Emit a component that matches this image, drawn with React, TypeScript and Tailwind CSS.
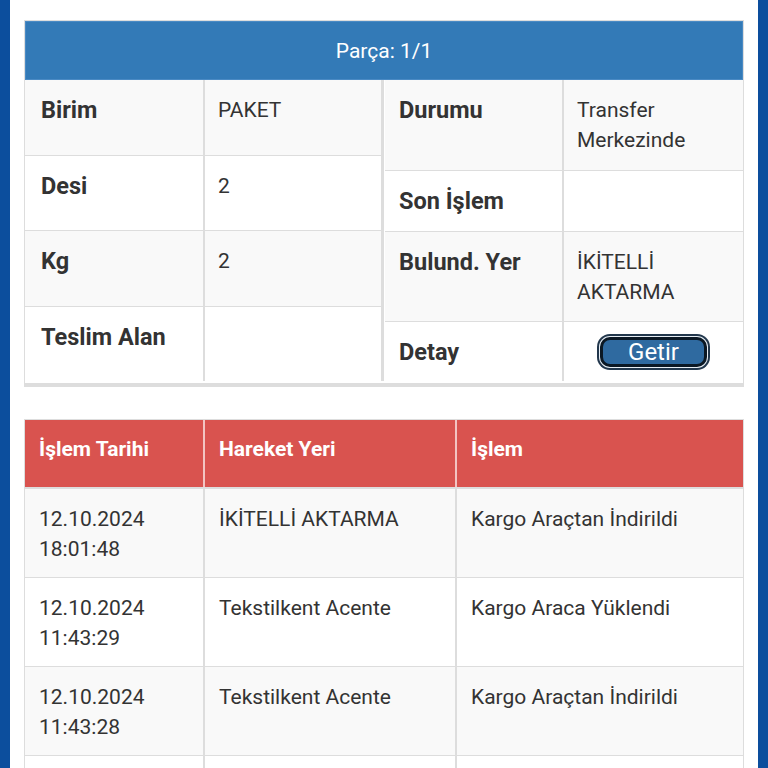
import React from 'react'

const parcaLeft = [
  { label: 'Birim', value: 'PAKET' },
  { label: 'Desi', value: '2' },
  { label: 'Kg', value: '2' },
  { label: 'Teslim Alan', value: '' },
]

const hareketler = [
  { tarih: '12.10.2024', saat: '18:01:48', yer: 'İKİTELLİ AKTARMA', islem: 'Kargo Araçtan İndirildi' },
  { tarih: '12.10.2024', saat: '11:43:29', yer: 'Tekstilkent Acente', islem: 'Kargo Araca Yüklendi' },
  { tarih: '12.10.2024', saat: '11:43:28', yer: 'Tekstilkent Acente', islem: 'Kargo Araçtan İndirildi' },
  { tarih: '12.10.2024', saat: '11:20:15', yer: 'Tekstilkent Acente', islem: 'Kargo Kabul Edildi' },
]

export default function App() {
  return (
    <div className="min-h-screen bg-[#0c4e9d] px-[10px] font-['Roboto','Liberation_Sans',sans-serif] text-[21px] leading-[30px] text-[#333]">
      <div className="min-h-screen bg-white px-[14px] pt-5 pb-10">
        {/* parça paneli */}
        <div className="border border-[#ddd]">
          <div className="flex h-[59px] items-center justify-center border border-[#4a8ac4] bg-[#337ab7] text-[21px] text-white">
            Parça: 1/1
          </div>

          <div className="flex items-stretch border-b-[3px] border-[#ddd] pb-[2px]">
            <div className="flex w-1/2 flex-col border-r-[3px] border-[#ddd]">
              {parcaLeft.map((r, i) => (
                <div
                  key={r.label}
                  className={`grid flex-1 grid-cols-[180px_1fr] border-b border-[#ddd] last:border-b-0 ${i % 2 === 0 ? 'bg-[#f9f9f9]' : 'bg-white'}`}
                >
                  <div className="border-r-2 border-[#ddd] px-4 py-[15px] text-[23.5px] font-bold">{r.label}</div>
                  <div className="px-[13px] py-[15px]">{r.value}</div>
                </div>
              ))}
            </div>

            <div className="flex w-1/2 flex-col pl-[1px]">
              <div className="grid grid-cols-[179px_1fr] border-b border-[#ddd] bg-[#f9f9f9]">
                <div className="border-r-2 border-[#ddd] px-[14px] pt-[15px] pb-[15px] text-[23.5px] font-bold">Durumu</div>
                <div className="px-[13px] pt-[15px] pb-[15px]">
                  Transfer
                  <br />
                  Merkezinde
                </div>
              </div>
              <div className="grid grid-cols-[179px_1fr] border-b border-[#ddd] bg-white">
                <div className="border-r-2 border-[#ddd] px-[14px] pt-[15px] pb-[15px] text-[23.5px] font-bold">Son İşlem</div>
                <div className="px-[13px] pt-[15px] pb-[15px]">&nbsp;</div>
              </div>
              <div className="grid grid-cols-[179px_1fr] border-b border-[#ddd] bg-[#f9f9f9]">
                <div className="border-r-2 border-[#ddd] px-[14px] pt-[15px] pb-[14px] text-[23.5px] font-bold">Bulund. Yer</div>
                <div className="px-[13px] pt-[15px] pb-[14px]">
                  İKİTELLİ
                  <br />
                  AKTARMA
                </div>
              </div>
              <div className="grid grid-cols-[179px_1fr] bg-white">
                <div className="border-r-2 border-[#ddd] px-[14px] pt-[15px] pb-[14px] text-[23.5px] font-bold">Detay</div>
                <div className="flex items-center justify-center">
                  <button
                    type="button"
                    className="flex h-[30px] w-[107px] items-end justify-center overflow-hidden rounded-[10px] border-[3px] border-[#0b1824] bg-[#2f6aa0] text-[24px] leading-[24px] text-white shadow-[0_0_0_1px_#e6eef5,0_0_0_3px_#22374c]"
                  >
                    Getir
                  </button>
                </div>
              </div>
            </div>
          </div>
        </div>

        {/* hareketler */}
        <div className="mt-[32px] border border-[#ddd]">
          <div className="grid h-[69px] grid-cols-[180px_252px_1fr] border-b-2 border-[#ddd] bg-[#d9534f] font-bold text-white">
            <div className="border-r-2 border-[#f3c4c2] px-[14px] pt-[14px]">İşlem Tarihi</div>
            <div className="border-r-2 border-[#f3c4c2] px-[14px] pt-[14px]">Hareket Yeri</div>
            <div className="px-[14px] pt-[14px]">İşlem</div>
          </div>
          {hareketler.map((h, i) => (
            <div
              key={i}
              className={`grid grid-cols-[180px_252px_1fr] border-b border-[#ddd] ${i % 2 === 0 ? 'bg-[#f9f9f9]' : 'bg-white'}`}
            >
              <div className="border-r-2 border-[#ddd] px-[14px] pt-[15px] pb-[13px]">
                {h.tarih}
                <br />
                {h.saat}
              </div>
              <div className="border-r-2 border-[#ddd] px-[14px] pt-[15px] pb-[13px]">{h.yer}</div>
              <div className="px-[14px] pt-[15px] pb-[13px]">{h.islem}</div>
            </div>
          ))}
        </div>
      </div>
    </div>
  )
}
